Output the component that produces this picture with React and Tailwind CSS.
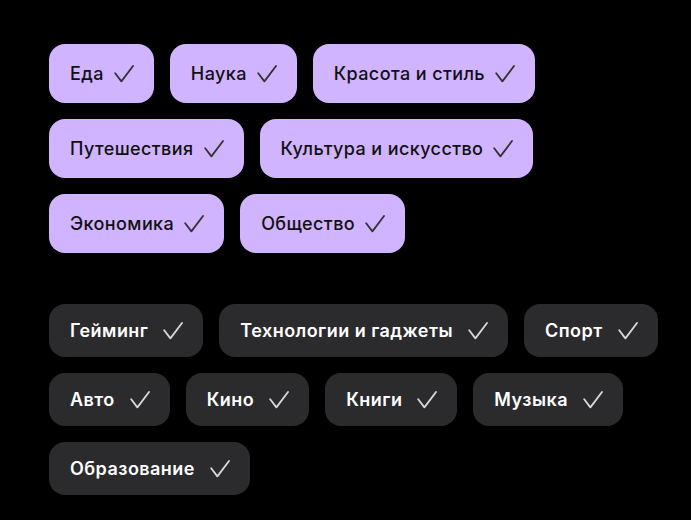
import React from 'react';

const primary = [
  ['Еда', 'Наука', 'Красота и стиль'],
  ['Путешествия', 'Культура и искусство'],
  ['Экономика', 'Общество'],
];
const secondary = [
  ['Гейминг', 'Технологии и гаджеты', 'Спорт'],
  ['Авто', 'Кино', 'Книги', 'Музыка'],
  ['Образование'],
];

const Check = ({ className }) => (
  <svg width="20" height="18" viewBox="0 0 20 18" fill="none" className={className}>
    <path d="M1.2 8.2 L7.4 16.4 L19 1" stroke="currentColor" strokeWidth="1.8" strokeLinecap="round" strokeLinejoin="round" />
  </svg>
);

const Chip = ({ label, dark }) => (
  <div
    className={`flex items-center rounded-[16px] pl-[21px] pr-[20px] ${
      dark
        ? 'h-[53px] bg-[#2b2b2d] text-white font-semibold gap-[15px] tracking-[0.45px]'
        : 'h-[59px] bg-[#d1b4ff] text-[#111] font-medium gap-[10px] tracking-[0.4px]'
    }`}
  >
    <span className="text-[18px] leading-6">{label}</span>
    <Check className={dark ? 'text-[#d8d8d8]' : 'text-[#333]'} />
  </div>
);

const Group = ({ rows, dark }) => (
  <div className="flex flex-col gap-4">
    {rows.map((row, i) => (
      <div key={i} className="flex gap-4">
        {row.map((t) => (
          <Chip key={t} label={t} dark={dark} />
        ))}
      </div>
    ))}
  </div>
);

export default function App() {
  return (
    <div className="min-h-[520px] w-[691px] bg-black pl-[49px] pt-[44px] font-['Inter','Noto_Sans',sans-serif]">
      <Group rows={primary} />
      <div className="mt-[51px]">
        <Group rows={secondary} dark />
      </div>
    </div>
  );
}
